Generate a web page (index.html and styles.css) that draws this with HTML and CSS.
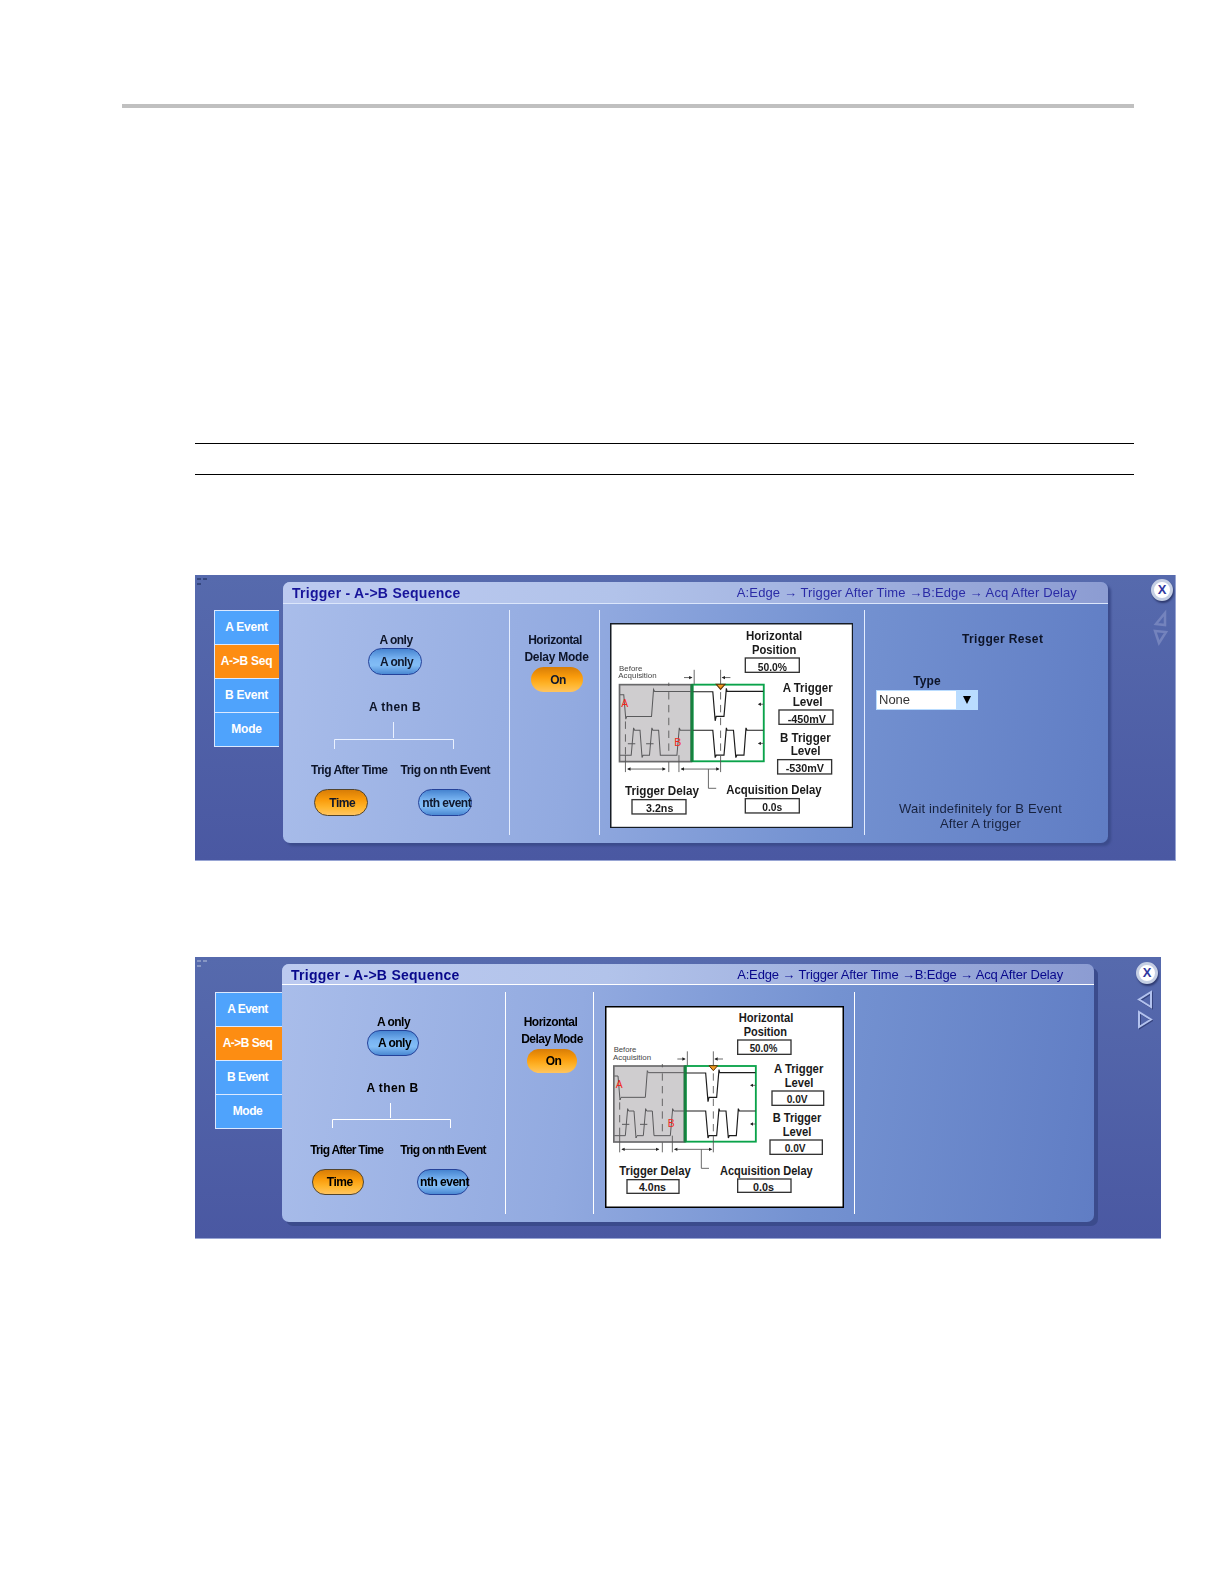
FILE: index.html
```
<!DOCTYPE html>
<html lang="en">
<head>
    <meta charset="UTF-8">
    <meta name="viewport" content="width=device-width, initial-scale=1.0">
    <title>Trigger - A-&gt;B Sequence</title>
    <link rel="stylesheet" href="styles.css">
</head>
<body>
    <div class="page">
        <div class="page-rule"></div>
        <div class="note-rules"></div>

        <div class="panel panel-delay">
            <svg class="grip" viewBox="0 0 12 12"><path d="M1 2h4M7 2h4M1 7h4"/></svg>
            <div class="tabs">
                <div class="tab">A Event</div>
                <div class="tab active">A-&gt;B Seq</div>
                <div class="tab">B Event</div>
                <div class="tab">Mode</div>
            </div>
            <div class="window">
                <div class="titlebar">
                    <span class="title">Trigger - A-&gt;B Sequence</span>
                    <span class="path">A:Edge → Trigger After Time →B:Edge → Acq After Delay</span>
                </div>
                <div class="columns">
                    <div class="col sequence">
                        <div class="label">A only</div>
                        <div class="button">A only</div>
                        <div class="label then">A then B</div>
                        <svg class="bracket" viewBox="0 0 120 27"><path d="M59.5 0V16M.5 27V17.5H119.5V27"/></svg>
                        <div class="options">
                            <div class="option time">
                                <div class="label">Trig After Time</div>
                                <div class="button on">Time</div>
                            </div>
                            <div class="option">
                                <div class="label">Trig on nth Event</div>
                                <div class="button">nth event</div>
                            </div>
                        </div>
                    </div>
                    <div class="col delay-mode">
                        <div class="label">Horizontal</div>
                        <div class="label wide">Delay Mode</div>
                        <div class="button on plain">On</div>
                    </div>
                    <div class="col diagram-col">
                        <svg class="diagram" viewBox="332 158 730 616">
                            <defs>
                                <g id="wave">
                                    <rect x="341.5" y="346" width="212" height="228" fill="#cfcdcf" stroke="#69696b" stroke-width="5"/>
                                    <rect x="557.5" y="346" width="210" height="227" fill="#fff" stroke="#0aa34a" stroke-width="5.5"/>
                                    <path d="M555 344V575" stroke="#17803f" stroke-width="8"/>
                                    <g fill="none" stroke="#5a5a5c" stroke-width="3">
                                        <path d="M343 376H354L360 448L363 440H436L442 360L445 366H553"/>
                                        <path d="M343 555H376L383 474L386 481H402L408 562L411 555H430L437 474L440 481H457L462 555H511L518 474L521 481H553"/>
                                        <path d="M366 521H388M420 521H442"/>
                                    </g>
                                    <g fill="none" stroke="#1c1c1c" stroke-width="3.5">
                                        <path d="M559 367H617L624 453L627 440H650L657 357L659 366H766"/>
                                        <path d="M559 481H617L624 562L627 555H650L657 474L659 481H678L685 562L688 555H709L715 474L718 481H766"/>
                                    </g>
                                    <g fill="none" stroke="#555" stroke-width="2.6">
                                        <path d="M359 455V555M487 368V555M640 368V548" stroke-dasharray="22 16"/>
                                        <path d="M359 555V605M487 575V605M487 340V350M517 555V605M640 555V605M562 302V345M640 302V345"/>
                                        <path d="M366 596H476M524 596H634M604 596V653H627M532 325H554M646 325H669M754 404H768M754 520H768"/>
                                    </g>
                                    <path d="M364 596l10-5v10zM478 596l-10-5v10zM522 596l10-5v10zM637 596l-10-5v10zM557 325l-10-5v10zM643 325l10-5v10zM750 404l9-5v10zM750 520l9-5v10z" fill="#222"/>
                                    <path d="M627 345H653L640 360Z" fill="#f29a22" stroke="#5a3308" stroke-width="3"/>
                                    <text class="mark" x="347" y="411">A</text>
                                    <text class="mark" x="503" y="529">B</text>
                                </g>
                            </defs>
                            <rect x="334" y="160" width="726" height="612" fill="#fff" stroke="#161c24" stroke-width="5"/>
                            <use href="#wave" transform="matrix(1.016 0 0 1.013 13.6 -7.5)"/>
                            <g class="small">
                                <text x="359" y="302" textLength="70" lengthAdjust="spacingAndGlyphs">Before</text>
                                <text x="357" y="324" textLength="115" lengthAdjust="spacingAndGlyphs">Acquisition</text>
                            </g>
                            <g class="fields">
                                <rect x="738" y="263" width="162" height="43"/>
                                <rect x="839" y="419" width="162" height="43"/>
                                <rect x="835" y="568" width="162" height="43"/>
                                <rect x="398" y="688" width="162" height="43"/>
                                <rect x="738" y="685" width="162" height="43"/>
                            </g>
                            <g class="names">
                                <text x="740" y="209" textLength="169" lengthAdjust="spacingAndGlyphs">Horizontal</text>
                                <text x="758" y="250" textLength="133" lengthAdjust="spacingAndGlyphs">Position</text>
                                <text x="850" y="365" textLength="150" lengthAdjust="spacingAndGlyphs">A Trigger</text>
                                <text x="880" y="406" textLength="90" lengthAdjust="spacingAndGlyphs">Level</text>
                                <text x="842" y="514" textLength="152" lengthAdjust="spacingAndGlyphs">B Trigger</text>
                                <text x="874" y="555" textLength="90" lengthAdjust="spacingAndGlyphs">Level</text>
                                <text x="377" y="674" textLength="222" lengthAdjust="spacingAndGlyphs">Trigger Delay</text>
                                <text x="681" y="672" textLength="286" lengthAdjust="spacingAndGlyphs">Acquisition Delay</text>
                            </g>
                            <g class="values">
                                <text x="775" y="301" textLength="88" lengthAdjust="spacingAndGlyphs">50.0%</text>
                                <text x="865" y="457" textLength="115" lengthAdjust="spacingAndGlyphs">-450mV</text>
                                <text x="859" y="606" textLength="115" lengthAdjust="spacingAndGlyphs">-530mV</text>
                                <text x="440" y="725" textLength="82" lengthAdjust="spacingAndGlyphs">3.2ns</text>
                                <text x="789" y="723" textLength="60" lengthAdjust="spacingAndGlyphs">0.0s</text>
                            </g>
                        </svg>
                    </div>
                    <div class="col reset">
                        <div class="label reset-title">Trigger Reset</div>
                        <div class="type">
                            <div class="label">Type</div>
                            <div class="select"><span class="value">None</span><span class="drop"><svg viewBox="0 0 8 8"><path d="M0 0H8L4 8Z"/></svg></span></div>
                        </div>
                        <div class="hint">Wait indefinitely for B Event<br>After A trigger</div>
                    </div>
                </div>
            </div>
            <div class="side">
                <div class="close">X</div>
                <svg class="arrows faded" viewBox="0 0 16 38"><path d="M13 4V16L4 15ZM3 22L14 23L7 34Z"/></svg>
            </div>
        </div>

        <div class="panel panel-time">
            <svg class="grip" viewBox="0 0 12 12"><path d="M1 2h4M7 2h4M1 7h4"/></svg>
            <div class="tabs">
                <div class="tab">A Event</div>
                <div class="tab active">A-&gt;B Seq</div>
                <div class="tab">B Event</div>
                <div class="tab">Mode</div>
            </div>
            <div class="window">
                <div class="titlebar">
                    <span class="title">Trigger - A-&gt;B Sequence</span>
                    <span class="path">A:Edge → Trigger After Time →B:Edge → Acq After Delay</span>
                </div>
                <div class="columns">
                    <div class="col sequence">
                        <div class="label">A only</div>
                        <div class="button">A only</div>
                        <div class="label then">A then B</div>
                        <svg class="bracket" viewBox="0 0 119 25"><path d="M58.5 0V15M.5 25V16.5H118.5V25"/></svg>
                        <div class="options">
                            <div class="option time">
                                <div class="label">Trig After Time</div>
                                <div class="button on">Time</div>
                            </div>
                            <div class="option">
                                <div class="label">Trig on nth Event</div>
                                <div class="button">nth event</div>
                            </div>
                        </div>
                    </div>
                    <div class="col delay-mode">
                        <div class="label">Horizontal</div>
                        <div class="label wide">Delay Mode</div>
                        <div class="button on plain">On</div>
                    </div>
                    <div class="col diagram-col">
                        <svg class="diagram" viewBox="315 166 717 606">
                            <rect x="317" y="168" width="713" height="602" fill="#fff" stroke="#000" stroke-width="5"/>
                            <use href="#wave"/>
                            <g class="small">
                                <text x="341" y="305" textLength="68" lengthAdjust="spacingAndGlyphs">Before</text>
                                <text x="339" y="328" textLength="114" lengthAdjust="spacingAndGlyphs">Acquisition</text>
                            </g>
                            <g class="fields">
                                <rect x="713" y="268" width="160" height="43"/>
                                <rect x="816" y="421" width="155" height="43"/>
                                <rect x="810" y="568" width="157" height="43"/>
                                <rect x="381" y="687" width="156" height="41"/>
                                <rect x="713" y="685" width="160" height="40"/>
                            </g>
                            <g class="names">
                                <text x="716" y="215" textLength="164" lengthAdjust="spacingAndGlyphs">Horizontal</text>
                                <text x="731" y="255" textLength="130" lengthAdjust="spacingAndGlyphs">Position</text>
                                <text x="822" y="368" textLength="148" lengthAdjust="spacingAndGlyphs">A Trigger</text>
                                <text x="854" y="409" textLength="86" lengthAdjust="spacingAndGlyphs">Level</text>
                                <text x="818" y="515" textLength="146" lengthAdjust="spacingAndGlyphs">B Trigger</text>
                                <text x="848" y="557" textLength="86" lengthAdjust="spacingAndGlyphs">Level</text>
                                <text x="358" y="674" textLength="214" lengthAdjust="spacingAndGlyphs">Trigger Delay</text>
                                <text x="660" y="672" textLength="278" lengthAdjust="spacingAndGlyphs">Acquisition Delay</text>
                            </g>
                            <g class="values">
                                <text x="749" y="304" textLength="83" lengthAdjust="spacingAndGlyphs">50.0%</text>
                                <text x="860" y="458" textLength="63" lengthAdjust="spacingAndGlyphs">0.0V</text>
                                <text x="854" y="605" textLength="63" lengthAdjust="spacingAndGlyphs">0.0V</text>
                                <text x="417" y="722" textLength="81" lengthAdjust="spacingAndGlyphs">4.0ns</text>
                                <text x="759" y="720" textLength="63" lengthAdjust="spacingAndGlyphs">0.0s</text>
                            </g>
                        </svg>
                    </div>
                    <div class="col reset"></div>
                </div>
            </div>
            <div class="side">
                <div class="close">X</div>
                <svg class="arrows" viewBox="0 0 16 40"><path class="shadow" d="M15 3V18L3 10.5ZM3 23V38L15 30.5Z"/><path d="M14 2V17L2 9.5ZM2 22V37L14 29.5Z"/></svg>
            </div>
        </div>
    </div>
</body>
</html>
```
FILE: styles.css
```
* {
    box-sizing: border-box;
}
body {
    margin: 0;
    background-color: #fff;
    font-family: "Liberation Sans", Arial, sans-serif;
}
svg {
    display: block;
}
.page {
    width: 1224px;
    height: 1584px;
    padding-top: 104px;
}
.page-rule {
    width: 1012px;
    height: 4px;
    margin-left: 122px;
    background-color: #c0c0c0;
}
.note-rules {
    width: 939px;
    height: 32px;
    margin: 335px 0 0 195px;
    border-top: 1px solid #000;
    border-bottom: 1px solid #000;
}

/* panel */
.panel {
    position: relative;
    display: flex;
    align-items: flex-start;
    margin-left: 195px;
    background: linear-gradient(#566aad, #4a58a2);
    border-bottom: 1px solid #98a5d4;
}
.panel-delay {
    width: 981px;
    height: 286px;
    margin-top: 100px;
    border-right: 1px solid #98a5d4;
}
.panel-time {
    width: 966px;
    height: 282px;
    margin-top: 96px;
}
.grip {
    position: absolute;
    top: 2px;
    left: 1px;
    width: 12px;
    height: 12px;
    fill: none;
    stroke: #35477e;
    stroke-width: 2;
}
.panel-time .grip {
    stroke: #8796c4;
}

/* tabs */
.tabs {
    width: 65px;
    margin: 35px 4px 0 19px;
    border: 1px solid #dce9ff;
    border-right: none;
}
.panel-time .tabs {
    width: 67px;
    margin: 35px 0 0 20px;
}
.tab {
    height: 34px;
    padding-right: 1px;
    background-color: #4fa3fc;
    color: #fff;
    font-size: 12px;
    font-weight: bold;
    line-height: 33px;
    letter-spacing: -0.25px;
    text-align: center;
}
.tab + .tab {
    border-top: 1px solid #dce9ff;
}
.tab.active {
    background-color: #fd8d12;
}
.tab:first-child {
    height: 33px;
}
.panel-time .tab {
    padding-right: 3px;
    letter-spacing: -0.5px;
}

/* window */
.window {
    width: 825px;
    height: 261px;
    margin-top: 7px;
    border-radius: 7px;
    overflow: hidden;
    background: linear-gradient(98deg, #a9bdea, #92aae0 36%, #7492d1 66%, #607dc4);
    filter: drop-shadow(3px 3px 1px #3b4b8c);
}
.panel-time .window {
    width: 812px;
    height: 258px;
    filter: drop-shadow(4px 4px 0 #3b4b8c);
}
.titlebar {
    display: flex;
    justify-content: space-between;
    height: 22px;
    padding: 0 31px 0 9px;
    background: linear-gradient(90deg, #bccaf0, #b2c3ea 40%, #8c9cd2);
    border-bottom: 1px solid #dbe6fb;
    line-height: 22px;
}
.panel-time .titlebar {
    height: 21px;
    padding: 0 31px 0 9px;
    border-color: #fff;
}
.title {
    color: #17149a;
    font-size: 14px;
    font-weight: bold;
    letter-spacing: 0.27px;
}
.path {
    color: #2a2ba6;
    font-size: 13px;
    letter-spacing: 0.12px;
}
.panel-time .title,
.panel-time .path {
    color: #08088c;
}
.panel-time .path {
    letter-spacing: -0.15px;
}
.columns {
    display: flex;
    height: 225px;
    margin-top: 6px;
}
.panel-time .columns {
    height: 222px;
    margin-top: 7px;
}
.col {
    display: flex;
    flex-direction: column;
    align-items: center;
    flex: none;
}
.col + .col {
    border-left: 1px solid #e4edff;
}
.panel-time .col + .col {
    border-color: #fff;
}
.label {
    height: 16px;
    color: #0d1428;
    font-size: 12px;
    font-weight: bold;
    line-height: 16px;
    letter-spacing: -0.5px;
    white-space: nowrap;
}
.panel-time .label,
.panel-time .button {
    color: #000;
}
.button {
    display: flex;
    justify-content: center;
    align-items: center;
    width: 54px;
    height: 27px;
    padding-left: 3px;
    border: 1px solid #24429a;
    border-radius: 14px;
    background: linear-gradient(#4684d0, #79b4f2 40%, #82bdf6 65%, #4a88d2);
    color: #10182c;
    font-size: 12px;
    font-weight: bold;
    letter-spacing: -0.5px;
    white-space: nowrap;
}
.panel-time .button {
    width: 52px;
    height: 26px;
}
.button.on {
    border-color: #54452c;
    background: linear-gradient(#d87d06, #fa9c0c 40%, #ffb52c 70%, #ffc460);
}
.button.on.plain {
    border-color: transparent;
    background-clip: padding-box;
}

/* sequence column */
.sequence {
    width: 226px;
    padding-top: 22px;
}
.panel-time .sequence {
    width: 223px;
}
.sequence > .button {
    margin-right: 2px;
}
.panel-time .sequence > .button {
    margin-right: 1px;
}
.then {
    margin: 24px 2px 7px 0;
    letter-spacing: 0.4px;
}
.bracket {
    width: 120px;
    height: 27px;
    margin-right: 4px;
    fill: none;
    stroke: #eaf1ff;
}
.panel-time .bracket {
    width: 119px;
    height: 25px;
    margin-right: 4px;
    stroke: #fff;
}
.options {
    display: flex;
    gap: 13px;
    margin: 13px 0 0 9px;
}
.panel-time .options {
    gap: 17px;
    margin: 14px 0 0 9px;
}
.option {
    display: flex;
    flex-direction: column;
    align-items: center;
    gap: 11px;
}
.option.time .button {
    margin-right: 17px;
}
.panel-time .option .label {
    letter-spacing: -0.73px;
}

/* horizontal delay column */
.delay-mode {
    width: 90px;
    padding: 22px 0 0 4px;
}
.panel-time .delay-mode {
    width: 88px;
    padding-left: 5px;
}
.delay-mode .label {
    height: 17px;
    margin-right: 3px;
}
.delay-mode .wide {
    margin-right: 0;
    letter-spacing: -0.25px;
}
.panel-time .wide {
    letter-spacing: -0.5px;
}

/* timing diagram */
.diagram-col {
    width: 265px;
    align-items: flex-start;
    padding: 12.5px 0 0 10px;
}
.panel-time .diagram-col {
    width: 261px;
    padding: 13.5px 0 0 10.5px;
}
.diagram {
    width: 243.3px;
    height: 205.3px;
}
.panel-time .diagram {
    width: 239px;
    height: 202px;
}
.diagram .mark {
    fill: #f0271c;
    font-size: 31px;
}
.diagram .small {
    fill: #444;
    font-size: 24px;
}
.diagram .fields {
    fill: #fff;
    stroke: #333;
    stroke-width: 4;
}
.diagram .names,
.diagram .values {
    fill: #1a1a1a;
    font-size: 38px;
    font-weight: bold;
}
.diagram .values {
    font-size: 33px;
}

/* trigger reset column */
.reset {
    width: 243px;
    align-items: stretch;
}
.reset-title {
    margin: 21px 0 0 97px;
    letter-spacing: 0.35px;
}
.type {
    width: 102px;
    margin: 26px 0 0 11px;
}
.type .label {
    height: 17px;
    letter-spacing: 0.1px;
    text-align: center;
}
.select {
    display: flex;
    height: 20px;
    border: 1px solid #b9dcff;
    background-color: #fff;
}
.value {
    flex: 1;
    padding-left: 2px;
    color: #333;
    font-size: 13px;
    line-height: 18px;
}
.drop {
    display: flex;
    justify-content: center;
    align-items: center;
    width: 21px;
    background-color: #b9dcff;
}
.drop svg {
    width: 8px;
    height: 8px;
}
.hint {
    margin: 92px 11px 0 0;
    color: #17223f;
    font-size: 13px;
    line-height: 14.5px;
    letter-spacing: 0.15px;
    text-align: center;
}

/* close and page arrows */
.side {
    display: flex;
    flex-direction: column;
    align-items: center;
    margin: 4px 0 0 43px;
}
.panel-time .side {
    margin: 5px 0 0 42px;
}
.close {
    width: 22px;
    height: 22px;
    border: 3px solid #c5cfe4;
    border-radius: 50%;
    background-color: #fff;
    box-shadow: 1px 2px 2px #2e3a70;
    color: #3038a0;
    font-size: 13px;
    font-weight: bold;
    line-height: 16px;
    text-align: center;
}
.arrows {
    width: 16px;
    height: 40px;
    margin: 6px 4px 0 0;
    fill: none;
    stroke: #b3c2ee;
    stroke-width: 2;
}
.arrows .shadow {
    stroke: #35437e;
}
.arrows.faded {
    height: 38px;
    margin-top: 8px;
    stroke: #7483bd;
    stroke-width: 2.5;
}
```
